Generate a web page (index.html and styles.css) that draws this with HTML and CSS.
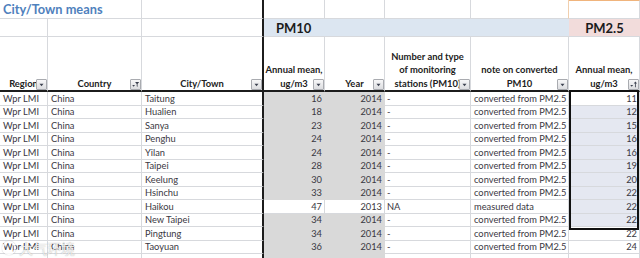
FILE: index.html
```html
<!DOCTYPE html>
<html>
<head>
<meta charset="utf-8">
<link rel="stylesheet" href="styles.css">
</head>
<body>
<div class="sheet">
  <div class="row r1">
    <div class="c title ab">City/Town means</div>
    <div class="c split"></div>
    <div class="c"></div>
    <div class="c"></div>
    <div class="c"></div>
    <div class="c orange-r"></div>
    <div class="c orange-t"></div>
  </div>
  <div class="row r2">
    <div class="c"></div>
    <div class="c"></div>
    <div class="c split"></div>
    <div class="c band pm10">PM10</div>
    <div class="c band25">PM2.5</div>
  </div>
  <div class="row hd">
    <div class="c h"><span>Region</span><i class="btn"><svg viewBox="0 0 11 11"><path d="M3 4.5h5l-2.5 3z"/></svg></i></div>
    <div class="c h"><span>Country</span><i class="btn"><svg viewBox="0 0 11 11"><path d="M1.5 6h3.4l-1.7 2.2z"/><path d="M5 2.5h5l-2 2.4v3.6l-1-0.8v-2.8z"/></svg></i></div>
    <div class="c h split"><span>City/Town</span><i class="btn"><svg viewBox="0 0 11 11"><path d="M3 4.5h5l-2.5 3z"/></svg></i></div>
    <div class="c h"><span>Annual mean,</span><span>ug/m3</span><i class="btn"><svg viewBox="0 0 11 11"><path d="M3 4.5h5l-2.5 3z"/></svg></i></div>
    <div class="c h"><span>Year</span><i class="btn"><svg viewBox="0 0 11 11"><path d="M3 4.5h5l-2.5 3z"/></svg></i></div>
    <div class="c h"><span>Number and type</span><span>of monitoring</span><span>stations (PM10)</span><i class="btn"><svg viewBox="0 0 11 11"><path d="M3 4.5h5l-2.5 3z"/></svg></i></div>
    <div class="c h"><span>note on converted</span><span>PM10</span><i class="btn"><svg viewBox="0 0 11 11"><path d="M3 4.5h5l-2.5 3z"/></svg></i></div>
    <div class="c h"><span>Annual mean,</span><span>ug/m3</span><i class="btn"><svg viewBox="0 0 11 11"><path d="M1.5 6h3.6l-1.8 2.3z"/><path d="M7.8 1.8l-2 2.4h1.5v4.6h1v-4.6h1.5z"/></svg></i></div>
  </div>

  <div class="row d"><div class="c t">Wpr LMI</div><div class="c t">China</div><div class="c t split">Taitung</div><div class="c n g">16</div><div class="c n g">2014</div><div class="c t f">-</div><div class="c t">converted from PM2.5</div><div class="c n">11</div></div>
  <div class="row d"><div class="c t">Wpr LMI</div><div class="c t">China</div><div class="c t split">Hualien</div><div class="c n g">18</div><div class="c n g">2014</div><div class="c t f">-</div><div class="c t">converted from PM2.5</div><div class="c n sel">12</div></div>
  <div class="row d"><div class="c t">Wpr LMI</div><div class="c t">China</div><div class="c t split">Sanya</div><div class="c n g">23</div><div class="c n g">2014</div><div class="c t f">-</div><div class="c t">converted from PM2.5</div><div class="c n sel">15</div></div>
  <div class="row d"><div class="c t">Wpr LMI</div><div class="c t">China</div><div class="c t split">Penghu</div><div class="c n g">24</div><div class="c n g">2014</div><div class="c t f">-</div><div class="c t">converted from PM2.5</div><div class="c n sel">16</div></div>
  <div class="row d"><div class="c t">Wpr LMI</div><div class="c t">China</div><div class="c t split">Yilan</div><div class="c n g">24</div><div class="c n g">2014</div><div class="c t f">-</div><div class="c t">converted from PM2.5</div><div class="c n sel">16</div></div>
  <div class="row d"><div class="c t">Wpr LMI</div><div class="c t">China</div><div class="c t split">Taipei</div><div class="c n g">28</div><div class="c n g">2014</div><div class="c t f">-</div><div class="c t">converted from PM2.5</div><div class="c n sel">19</div></div>
  <div class="row d"><div class="c t">Wpr LMI</div><div class="c t">China</div><div class="c t split">Keelung</div><div class="c n g">30</div><div class="c n g">2014</div><div class="c t f">-</div><div class="c t">converted from PM2.5</div><div class="c n sel">20</div></div>
  <div class="row d"><div class="c t">Wpr LMI</div><div class="c t">China</div><div class="c t split">Hsinchu</div><div class="c n g">33</div><div class="c n g">2014</div><div class="c t f">-</div><div class="c t">converted from PM2.5</div><div class="c n sel">22</div></div>
  <div class="row d"><div class="c t">Wpr LMI</div><div class="c t">China</div><div class="c t split">Haikou</div><div class="c n">47</div><div class="c n">2013</div><div class="c t f">NA</div><div class="c t">measured data</div><div class="c n sel">22</div></div>
  <div class="row d"><div class="c t">Wpr LMI</div><div class="c t">China</div><div class="c t split">New Taipei</div><div class="c n g">34</div><div class="c n g">2014</div><div class="c t f">-</div><div class="c t">converted from PM2.5</div><div class="c n sel">22</div></div>
  <div class="row d"><div class="c t">Wpr LMI</div><div class="c t">China</div><div class="c t split">Pingtung</div><div class="c n g">34</div><div class="c n g">2014</div><div class="c t f">-</div><div class="c t">converted from PM2.5</div><div class="c n">22</div></div>
  <div class="row d"><div class="c t">Wpr LMI</div><div class="c t">China</div><div class="c t split">Taoyuan</div><div class="c n g">36</div><div class="c n g">2014</div><div class="c t f">-</div><div class="c t">converted from PM2.5</div><div class="c n">24</div></div>
  <div class="row d"><div class="c"></div><div class="c"></div><div class="c split"></div><div class="c g"></div><div class="c g"></div><div class="c"></div><div class="c"></div><div class="c"></div></div>

  <div class="selbox"></div>
  <div class="watermark"><span class="wm-logo"></span><span>大气环境</span></div>
</div>
</body>
</html>
```

FILE: styles.css
```css
* { box-sizing: border-box; }
html, body { margin: 0; padding: 0; }
body {
  width: 640px;
  height: 258px;
  overflow: hidden;
  background: #fff;
  font-family: Lato, "Liberation Sans", sans-serif;
  color: #3a3842;
}
.sheet {
  position: relative;
  width: 640px;
  height: 258px;
  overflow: hidden;
}
.row {
  display: grid;
  grid-template-columns: 48px 94px 122px 61px 60px 86px 98px 71px;
}
.c {
  border-right: 1px solid #d7d9dd;
  border-bottom: 1px solid #d7d9dd;
  white-space: nowrap;
  overflow: hidden;
  min-width: 0;
}
.c.split { border-right: 2px solid #1c1c1c; }

/* row 1 */
.r1 { height: 19px; }
.title {
  grid-column: span 2;
  font-weight: 700;
  font-size: 12.8px;
  color: #4f81bd;
  padding: 0 0 1px 3px;
  display: flex;
  align-items: flex-end;
}
.orange-r { border-right-color: #f1cfae; }
.orange-t { border-top: 1px solid #f0b47c; }

/* row 2 */
.r2 { height: 18px; }
.band {
  grid-column: span 4;
  background: #dce6f1;
  border-right: none;
}
.pm10, .band25 {
  font-weight: 700;
  font-size: 13px;
  color: #1b1b1b;
  display: flex;
  align-items: center;
}
.pm10 { padding-left: 12px; }
.band25 {
  background: #f2dcdb;
  justify-content: center;
  border-right: none;
}

/* header row */
.hd { height: 55px; }
.hd .c { border-bottom: 2px solid #1c1c1c; }
.h {
  position: relative;
  display: flex;
  flex-direction: column;
  justify-content: flex-end;
  align-items: center;
  font-weight: 700;
  font-size: 9.4px;
  line-height: 13.5px;
  color: #222;
  text-align: center;
}
.btn {
  position: absolute;
  right: 0;
  bottom: 0;
  width: 11px;
  height: 11px;
  border: 1px solid #a9abb0;
  border-radius: 1px;
  background: linear-gradient(#f7f7f8, #dcdde0);
  display: block;
}
.btn svg { display: block; width: 9px; height: 9px; fill: #3d4250; }

/* data rows */
.d { height: 13.5px; }
.d .c {
  font-size: 9.3px;
  line-height: 12px;
  display: flex;
  align-items: flex-end;
}
.t { padding-left: 3px; }
.t.f { padding-left: 2px; }
.n { justify-content: flex-end; padding-right: 2px; }
.g { background: #d9d9d9; border-right-color: #d9d9d9; border-bottom-color: #d9d9d9; }
.sel { background: #e5e8f1; }

/* selection outline */
.selbox {
  position: absolute;
  left: 569px;
  top: 90px;
  width: 70px;
  height: 140px;
  border: 2px solid #111;
  pointer-events: none;
}

/* watermark */
.watermark {
  position: absolute;
  left: 2px;
  top: 238px;
  display: flex;
  align-items: center;
  gap: 3px;
  font-family: "Noto Sans CJK SC", sans-serif;
  font-size: 14px;
  color: rgba(255, 255, 255, 0.8);
  text-shadow: 0 0 1px rgba(80, 80, 80, 0.5);
}
.wm-logo {
  width: 14px;
  height: 14px;
  border-radius: 50%;
  border: 2px solid rgba(255, 255, 255, 0.8);
  box-shadow: 0 0 1px rgba(80, 80, 80, 0.5);
}
```
